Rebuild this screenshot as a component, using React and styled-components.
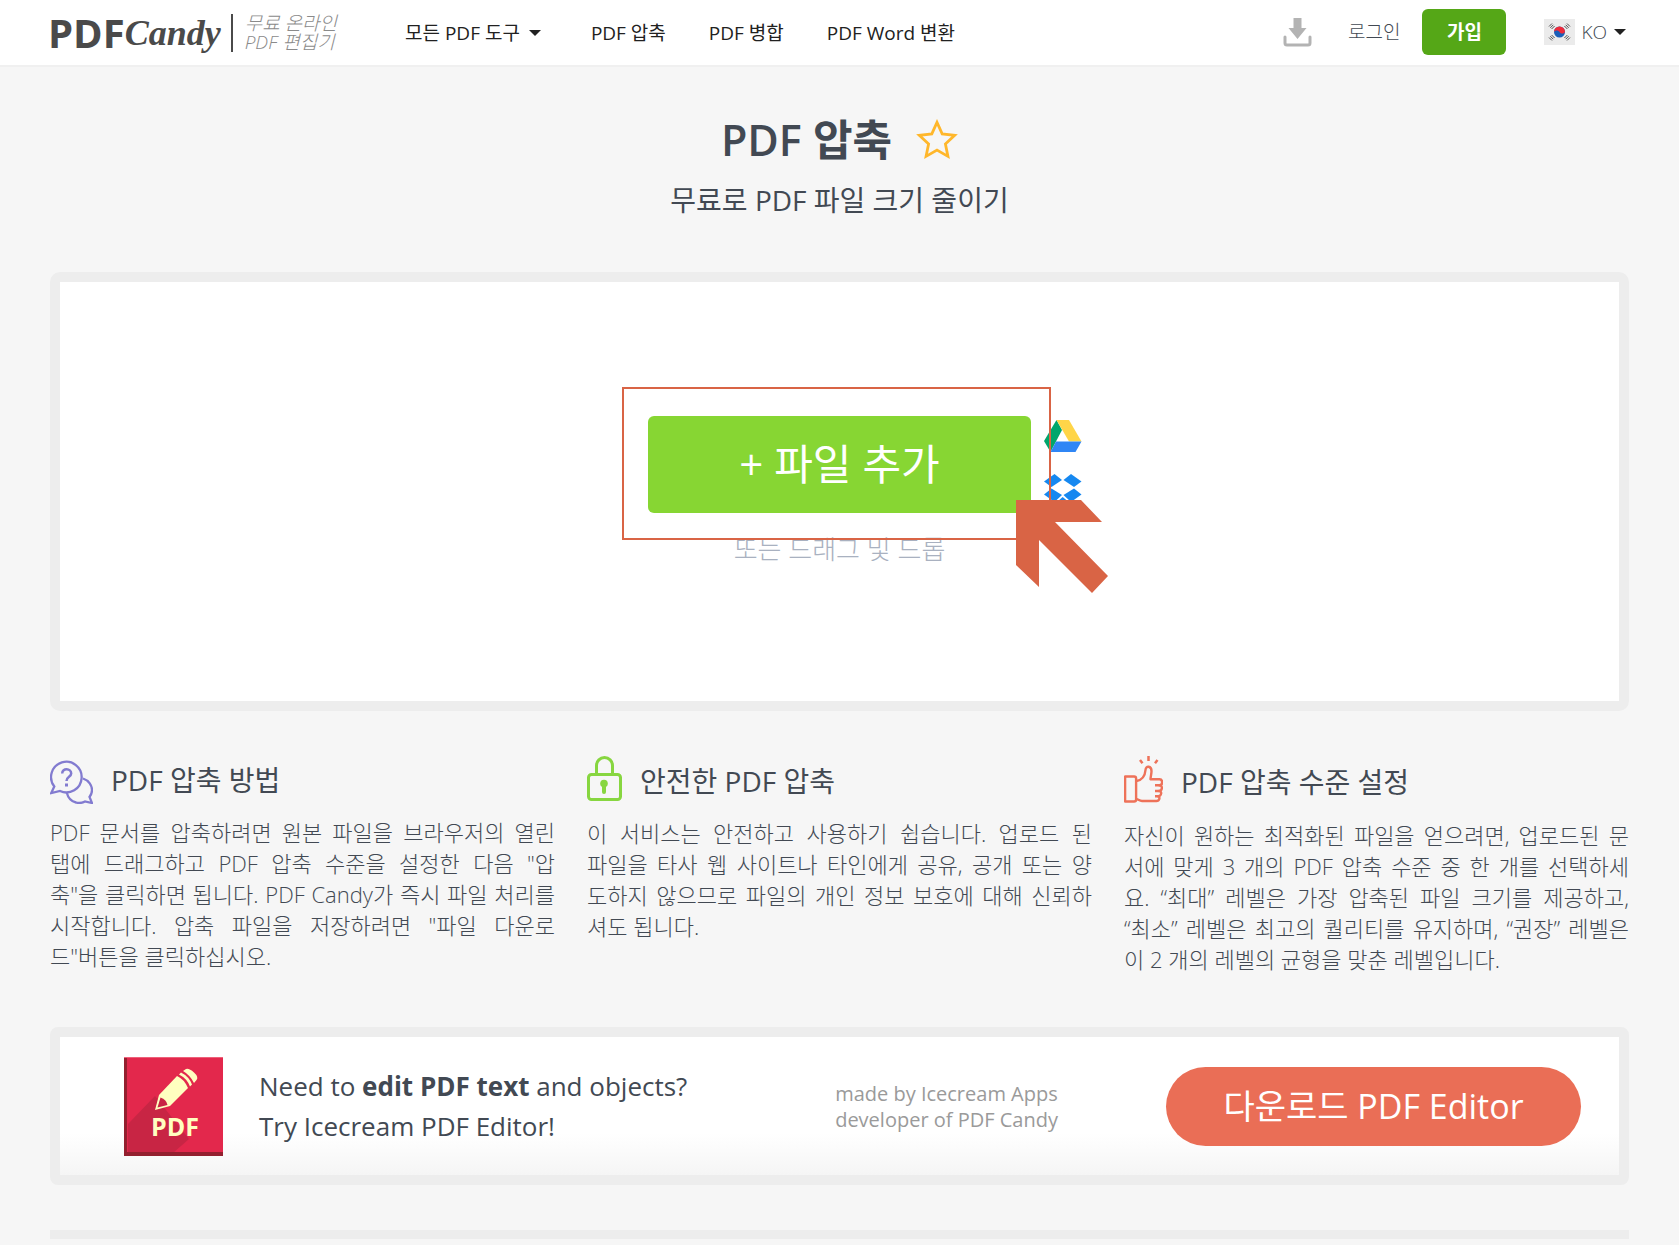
import React from 'react'
import styled, { createGlobalStyle } from 'styled-components'

const GlobalStyle = createGlobalStyle`
  * {
    box-sizing: border-box;
  }
  body {
    margin: 0;
    background: #f6f6f6;
    color: #424953;
    font-family: 'Open Sans', 'Noto Sans CJK KR', sans-serif;
  }
  a {
    color: inherit;
    text-decoration: none;
  }
  button {
    padding: 0;
    border: 0;
    background: none;
    color: inherit;
    font: inherit;
    cursor: pointer;
  }
  svg {
    display: block;
    flex-shrink: 0;
  }
`

const Header = styled.header`
  display: flex;
  align-items: center;
  height: 67px;
  padding: 0 52px 0 48px;
  background: white;
  border-bottom: 2px solid #f0f0f0;
`

const Logo = styled.a`
  display: flex;
  align-items: center;
  height: 64px;
  color: #4a4a4a;
`

const LogoBold = styled.span`
  font-size: 40px;
  line-height: 60px;
  font-weight: 700;
`

const LogoScript = styled.span`
  font-family: 'Liberation Serif', serif;
  font-size: 36px;
  line-height: 60px;
  font-style: italic;
  font-weight: 700;
`

const Tagline = styled.span`
  margin-left: 10px;
  padding-left: 12px;
  border-left: 2px solid #4a4a4a;
  color: #8a8a8a;
  font-size: 19px;
  line-height: 19px;
  font-weight: 300;
  font-style: italic;
  white-space: nowrap;
`

const Nav = styled.nav`
  display: flex;
  align-items: center;
  gap: 43px;
  margin-left: 68px;
  color: #212121;
  font-size: 19px;
  line-height: 24px;
  white-space: nowrap;
`

const MenuButton = styled.button`
  display: flex;
  align-items: center;
  gap: 8px;
  margin-right: 6px;
`

const Account = styled.div`
  display: flex;
  align-items: center;
  margin-left: auto;
  padding-bottom: 2px;
  font-size: 19px;
  line-height: 24px;
  font-weight: 300;
  white-space: nowrap;
`

const Login = styled.a`
  margin: 0 22px 0 36px;
`

const SignUp = styled.a`
  width: 84px;
  height: 46px;
  margin-right: 38px;
  border-radius: 6px;
  background: #55a717;
  color: white;
  font-weight: 700;
  line-height: 46px;
  text-align: center;
`

const Language = styled.button`
  display: flex;
  align-items: center;
  gap: 6px;
`

const Main = styled.main`
  padding: 0 50px;
`

const Intro = styled.section`
  padding: 42px 0 53px;
  text-align: center;
`

const TitleRow = styled.div`
  display: flex;
  align-items: center;
  justify-content: center;
  gap: 24px;
`

const Title = styled.h1`
  margin: 0;
  font-size: 43px;
  line-height: 62px;
  font-weight: 600;
`

const Subtitle = styled.h2`
  margin: 10px 0 0;
  font-size: 28px;
  line-height: 38px;
  font-weight: 400;
`

const DropZone = styled.section`
  display: flex;
  flex-direction: column;
  align-items: center;
  padding: 134px 0;
  border: 10px solid #ededed;
  border-radius: 10px;
  background: white;
`

const Upload = styled.div`
  position: relative;
`

const AddButton = styled.button`
  width: 383px;
  height: 97px;
  padding-bottom: 2px;
  border-radius: 6px;
  background: #87d633;
  color: white;
  font-size: 42px;
  line-height: 60px;
`

const CloudLinks = styled.div`
  position: absolute;
  top: 4px;
  left: 396px;
  display: flex;
  flex-direction: column;
  gap: 22px;
`

const DropHint = styled.p`
  margin: 18px 0 0;
  color: #a9b1c0;
  font-size: 26px;
  line-height: 36px;
  font-weight: 300;
`

const Highlight = styled.div`
  position: absolute;
  top: -29px;
  right: -20px;
  bottom: -27px;
  left: -26px;
  border: 2px solid #d96445;
  pointer-events: none;
`

const Pointer = styled.svg`
  position: absolute;
  top: 84px;
  left: 368px;
  pointer-events: none;
`

const Features = styled.section`
  display: grid;
  grid-template-columns: repeat(3, 1fr);
  gap: 32px;
  padding: 45px 0 52px;
`

const FeatureHead = styled.div`
  display: flex;
  align-items: center;
  gap: 18px;
`

const FeatureTitle = styled.h3`
  margin: 0;
  font-size: 28px;
  line-height: 38px;
  font-weight: 400;
`

const FeatureText = styled.p`
  margin: 13px 0 0;
  font-size: 22px;
  line-height: 31px;
  font-weight: 300;
`

const Line = styled.span`
  display: block;
  text-align: justify;
  text-align-last: justify;
  :last-child& {
    text-align-last: left;
  }
`

const Banner = styled.section`
  display: flex;
  align-items: center;
  height: 158px;
  padding: 0 38px 0 64px;
  border: 10px solid #ededed;
  border-radius: 8px;
  background: linear-gradient(white 70%, #f5f5f5);
`

const BannerText = styled.p`
  margin: 0 0 0 36px;
  font-size: 26px;
  line-height: 40px;
`

const Credit = styled.p`
  margin: 0 108px 0 auto;
  padding-top: 2px;
  color: #9a9a9a;
  font-size: 20px;
  line-height: 26px;
`

const Download = styled.a`
  width: 415px;
  height: 79px;
  border-radius: 40px;
  background: #ea6e56;
  color: white;
  font-size: 34px;
  line-height: 79px;
  text-align: center;
`

const Divider = styled.hr`
  height: 9px;
  margin: 45px 0 0;
  border: 0;
  background: #ededed;
`

const Caret = () => (
  <svg width="14" height="8" viewBox="0 0 14 8" fill="#212121">
    <path d="M1 1h12L7 7z" />
  </svg>
)

const DownloadIcon = () => (
  <svg width="29" height="30" viewBox="0 0 29 30">
    <path d="M10.500 1h8v10h5L14.500 22 5.500 11h5z" fill="#b3b3b3" />
    <path d="M2 20v6a2 2 0 0 0 2 2h21a2 2 0 0 0 2-2v-6" fill="none" stroke="#b3b3b3" strokeWidth="3" strokeLinecap="round" />
  </svg>
)

const FlagIcon = () => (
  <svg width="31" height="26" viewBox="0 0 31 26">
    <path d="M0 0h31v26H0z" fill="#ebebeb" />
    <circle cx="15.500" cy="13" r="5.500" fill="#1a5eb8" />
    <path d="M10 13a5.500 5.500 0 0 1 11 0c-1.500 2-4 2-5.500 0s-4-2-5.500 0" fill="#ee2a3a" />
    <g stroke="#555" strokeWidth="1">
      <path d="M5 7.500 8 4.500M6.300 8.800l3-3M7.600 10l3-3" />
      <path d="m5 18.500 3 3M6.300 17.200l3 3M7.600 16l3 3" />
      <path d="m26 7.500-3-3M24.700 8.800l-3-3M23.400 10l-3-3" />
      <path d="m26 18.500-3 3M24.700 17.200l-3 3M23.400 16l-3 3" />
    </g>
  </svg>
)

const StarIcon = () => (
  <svg width="42" height="42" viewBox="0 0 38 38" fill="none" stroke="#ffb72b" strokeWidth="2.500">
    <path d="M19 3l4.700 10.500 11.300 1.300-8.400 7.700 2.300 11.300L19 28.200 9.100 33.800l2.300-11.300L3 14.800l11.300-1.300z" />
  </svg>
)

const DriveIcon = () => (
  <svg width="38" height="32" viewBox="0 0 38 32">
    <path d="M12.500 0 18 10 6.500 32 0 21z" fill="#00a66c" />
    <path d="M12.500 0H25l12.500 21.500H25z" fill="#ffd548" />
    <path d="M12 21.500h25.500L31.500 32h-25z" fill="#2f86f5" />
  </svg>
)

const DropboxIcon = () => (
  <svg width="38" height="35" viewBox="0 0 38 35" fill="#1688f0">
    <path d="M0 7.500 10.500 0 18 6 7.500 13z" />
    <path d="M37.500 7.500 27 0l-7.500 6L30 13z" />
    <path d="M0 20.500 7.500 14.500 18 21l-7.500 7z" />
    <path d="M37.500 20.500 30 14.500 19.500 21l7.500 7z" />
    <path d="M10.500 30l8.200-7 8.300 7-8.300 5z" />
  </svg>
)

const QuestionIcon = () => (
  <svg width="43" height="48" viewBox="0 0 43 48" fill="none" stroke="#827bd0" strokeWidth="2.300">
    <path d="M4.300 30.500A15.300 15.300 0 1 1 10 35L1.300 37z" />
    <path d="M33 22.500c6 2 9 7 9 11.500 0 3-1 5-2.500 7l2.500 6-7-1.500c-3 1.500-6 2-9 1-5-1-8-5-9.300-10" />
    <path d="M12.200 17.500c0-6 9-5.500 9 0 0 3.500-4.700 3.300-4.700 7.500" strokeWidth="2.500" />
    <path d="M16.500 27.500v3" strokeWidth="3" />
  </svg>
)

const LockIcon = () => (
  <svg width="35" height="49" viewBox="0 0 35 49" fill="none" stroke="#87d640" strokeWidth="3">
    <rect x="1.500" y="18.500" width="32" height="25" rx="3" />
    <path d="M9.500 18V9.500a8 8 0 0 1 16 0V18" />
    <circle cx="17" cy="27.500" r="3.800" fill="#87d640" stroke="none" />
    <path d="M17 28v8" strokeWidth="4" strokeLinecap="round" />
  </svg>
)

const ThumbIcon = () => (
  <svg width="39" height="51" viewBox="0 0 39 51" fill="none" stroke="#ee7259" strokeWidth="2.400" strokeLinejoin="round">
    <path d="M1.100 20.500h9q2 0 2 2v21q0 2-2 2h-9z" />
    <path d="M12.500 25c6-1 8.500-5 9-11 .3-5 6-4 6 1 0 3-.8 5-1 8.300h9c3.500 0 3.500 6 0 6 3.500 0 3 5.700-.5 5.700 3.500 0 2.500 5.300-1 5.300 2.500.500 1.500 4.700-1.500 4.700H18c-3 0-3-1.700-6-2" />
    <path d="M31 29.300h5M31 35h4.500M31 40.300h3.500" />
    <path d="m16 4 2.500 3.200M24.500 0v5M33.500 4 31 7.200" strokeWidth="2.500" />
  </svg>
)

const EditorIcon = () => (
  <svg width="99" height="99" viewBox="0 0 99 99">
    <path d="M0 0h99v99H0z" fill="#e3284c" />
    <path d="M4 67 31 39l34 43-16 14H4z" fill="#c82544" />
    <path d="M0 0h3v99H0zM0 95h99v4H0z" fill="#93202f" />
    <path d="M0 0h99v1H0z" fill="#ee6079" />
    <path d="M31 53l4-15 18-19q7 3 11 12L46 49z" fill="#ffffc0" />
    <path d="M33.500 50.500l3-10q6 2 7 7.500z" fill="#c82544" />
    <path d="M55 17.500q8 4 11 12l2-2q-3-8-11-12zM59 14q7 4 11 12l2.500-3Q75 20 70 15.500 65 11 62 12z" fill="#ffffc0" />
    <text x="27" y="79" fill="#ffffc0" fontSize="25" fontWeight="700">PDF</text>
  </svg>
)

const features = [
  {
    Icon: QuestionIcon,
    title: 'PDF 압축 방법',
    lines: [
      'PDF 문서를 압축하려면 원본 파일을 브라우저의 열린',
      '탭에 드래그하고 PDF 압축 수준을 설정한 다음 "압',
      '축"을 클릭하면 됩니다. PDF Candy가 즉시 파일 처리를',
      '시작합니다. 압축 파일을 저장하려면 "파일 다운로',
      '드"버튼을 클릭하십시오.',
    ],
  },
  {
    Icon: LockIcon,
    title: '안전한 PDF 압축',
    lines: [
      '이 서비스는 안전하고 사용하기 쉽습니다. 업로드 된',
      '파일을 타사 웹 사이트나 타인에게 공유, 공개 또는 양',
      '도하지 않으므로 파일의 개인 정보 보호에 대해 신뢰하',
      '셔도 됩니다.',
    ],
  },
  {
    Icon: ThumbIcon,
    title: 'PDF 압축 수준 설정',
    lines: [
      '자신이 원하는 최적화된 파일을 얻으려면, 업로드된 문',
      '서에 맞게 3 개의 PDF 압축 수준 중 한 개를 선택하세',
      '요. “최대” 레벨은 가장 압축된 파일 크기를 제공하고,',
      '“최소” 레벨은 최고의 퀄리티를 유지하며, “권장” 레벨은',
      '이 2 개의 레벨의 균형을 맞춘 레벨입니다.',
    ],
  },
]

export default function App() {
  return (
    <>
      <GlobalStyle />
      <Header>
        <Logo href="#">
          <LogoBold>PDF</LogoBold>
          <LogoScript>Candy</LogoScript>
          <Tagline>
            무료 온라인
            <br />
            PDF 편집기
          </Tagline>
        </Logo>
        <Nav>
          <MenuButton>
            모든 PDF 도구
            <Caret />
          </MenuButton>
          <a href="#">PDF 압축</a>
          <a href="#">PDF 병합</a>
          <a href="#">PDF Word 변환</a>
        </Nav>
        <Account>
          <a href="#" aria-label="다운로드">
            <DownloadIcon />
          </a>
          <Login href="#">로그인</Login>
          <SignUp href="#">가입</SignUp>
          <Language>
            <FlagIcon />
            KO
            <Caret />
          </Language>
        </Account>
      </Header>
      <Main>
        <Intro>
          <TitleRow>
            <Title>PDF 압축</Title>
            <button aria-label="즐겨찾기">
              <StarIcon />
            </button>
          </TitleRow>
          <Subtitle>무료로 PDF 파일 크기 줄이기</Subtitle>
        </Intro>
        <DropZone>
          <Upload>
            <AddButton>+ 파일 추가</AddButton>
            <CloudLinks>
              <a href="#" aria-label="Google Drive">
                <DriveIcon />
              </a>
              <a href="#" aria-label="Dropbox">
                <DropboxIcon />
              </a>
            </CloudLinks>
            <Highlight />
            <Pointer width="93" height="94" viewBox="0 0 93 94" fill="#d96445">
              <path d="M0 0h65l21 22H39l53 54-16 17-53-53v47L0 65z" />
            </Pointer>
          </Upload>
          <DropHint>또는 드래그 및 드롭</DropHint>
        </DropZone>
        <Features>
          {features.map(({ Icon, title, lines }) => (
            <article key={title}>
              <FeatureHead>
                <Icon />
                <FeatureTitle>{title}</FeatureTitle>
              </FeatureHead>
              <FeatureText>
                {lines.map(line => (
                  <Line key={line}>{line}</Line>
                ))}
              </FeatureText>
            </article>
          ))}
        </Features>
        <Banner>
          <EditorIcon />
          <BannerText>
            Need to <b>edit PDF text</b> and objects?
            <br />
            Try Icecream PDF Editor!
          </BannerText>
          <Credit>
            made by Icecream Apps
            <br />
            developer of PDF Candy
          </Credit>
          <Download href="#">다운로드 PDF Editor</Download>
        </Banner>
        <Divider />
      </Main>
    </>
  )
}
